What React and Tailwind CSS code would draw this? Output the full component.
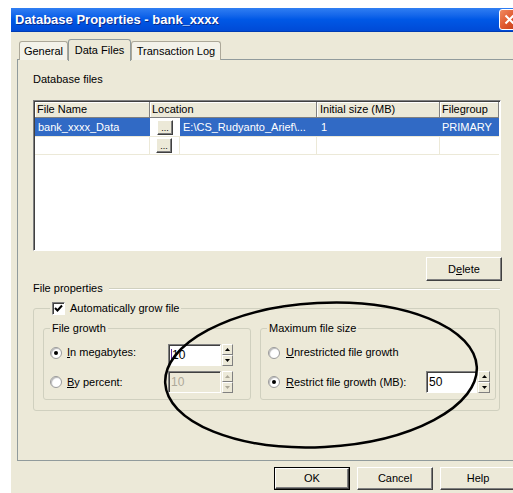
import React from "react";

const raised =
  "bg-[#ece9d8] border border-t-white border-l-white border-r-[#404040] border-b-[#404040] shadow-[inset_-1px_-1px_0_#808080]";
const sunken =
  "border border-t-[#808080] border-l-[#808080] border-r-white border-b-white shadow-[inset_1px_1px_0_#404040]";

function Button({ children, isDefault, className = "" }) {
  if (isDefault) {
    return (
      <div className={`border border-black ${className}`}>
        <div className={`h-full w-full flex items-center justify-center ${raised}`}>{children}</div>
      </div>
    );
  }
  return <div className={`flex items-center justify-center ${raised} ${className}`}>{children}</div>;
}

function Radio({ checked }) {
  return (
    <span className="w-[12px] h-[12px] shrink-0 rounded-full bg-white border border-[#9a9a9a] shadow-[inset_1px_1px_1px_#b8b8b8] flex items-center justify-center">
      {checked && <span className="w-[4px] h-[4px] rounded-full bg-black" />}
    </span>
  );
}

function SpinButton({ up, disabled }) {
  return (
    <div className="h-[11px] w-full bg-[#ece9d8] border border-t-white border-l-white border-r-[#808080] border-b-[#808080] flex items-center justify-center">
      <svg width="5" height="3" viewBox="0 0 5 3">
        <path d={up ? "M2.5 0 L5 3 L0 3Z" : "M0 0 L5 0 L2.5 3Z"} fill={disabled ? "#aca899" : "#000"} />
      </svg>
    </div>
  );
}

function Spinner({ disabled, className = "" }) {
  return (
    <div className={`flex flex-col ${className}`}>
      <SpinButton up disabled={disabled} />
      <SpinButton disabled={disabled} />
    </div>
  );
}

function NumberBox({ value, disabled, caret, className = "" }) {
  return (
    <div
      className={`h-[22px] flex items-center pl-[2px] text-[12px] ${sunken} ${
        disabled ? "bg-[#ece9d8] text-[#aca899]" : "bg-white text-black"
      } ${className}`}
    >
      {caret && <span className="w-px h-[13px] bg-[#5a2a9a]" />}
      <span>{value}</span>
    </div>
  );
}

export default function App() {
  return (
    <div className="relative w-[513px] h-[493px] overflow-hidden bg-white pt-[8px] pl-[11px] font-['Liberation_Sans',Arial,sans-serif] text-[11px] leading-[13px] text-black">
      <div className="w-[520px] h-[485px] bg-[#ece9d8] flex flex-col">
        {/* title bar */}
        <div className="h-[24px] shrink-0 flex items-center pl-[4px] bg-linear-to-b from-[#2f7ef2] via-[#0058e6] to-[#004ad6] border-b border-[#003cb4]">
          <span className="text-white font-bold text-[13px] leading-[16px] [text-shadow:1px_1px_0_#0a2a8a]">
            Database Properties - bank_xxxx
          </span>
          <div className="ml-auto mr-[11px] w-[21px] h-[21px] rounded-[3px] border border-white bg-linear-to-br from-[#f08a60] via-[#e0582e] to-[#c23a16] flex items-center justify-center">
            <svg width="11" height="11" viewBox="0 0 11 11">
              <path d="M1.5 1.5 L9.5 9.5 M9.5 1.5 L1.5 9.5" stroke="#fff" strokeWidth="2" />
            </svg>
          </div>
        </div>

        <div className="pl-[6px] flex flex-col">
          {/* tabs */}
          <div className="mt-[7px] h-[22px] flex items-end pl-[2px] relative z-10">
            <div className="mb-[1px] h-[19px] w-[49px] flex items-center justify-center border border-b-0 border-[#aca899] rounded-t-[3px] bg-[#f3f2ea]">
              General
            </div>
            <div className="h-[22px] w-[63px] flex items-start pt-[4px] justify-center border border-b-0 border-[#919b9c] rounded-t-[3px] bg-[#ece9d8]">
              Data Files
            </div>
            <div className="mb-[1px] h-[19px] w-[90px] flex items-center justify-center border border-b-0 border-[#aca899] rounded-t-[3px] bg-[#f3f2ea]">
              Transaction Log
            </div>
          </div>

          {/* tab page */}
          <div className="-mt-[2px] w-[510px] h-[402px] border border-[#919b9c] pl-[15px] pt-[13px] flex flex-col">
            <div>Database files</div>

            {/* file list */}
            <div className={`mt-[14px] w-[468px] h-[151px] bg-white ${sunken} p-px flex flex-col`}>
              <div className="h-[16px] flex bg-[#ece9d8] border-b border-[#808080]">
                <div className="w-[115px] pl-[2px] border-r border-[#808080] shadow-[inset_1px_1px_0_#fff] flex items-center">File Name</div>
                <div className="w-[167px] pl-[2px] border-r border-[#808080] shadow-[inset_1px_1px_0_#fff] flex items-center">Location</div>
                <div className="w-[123px] pl-[3px] border-r border-[#808080] shadow-[inset_1px_1px_0_#fff] flex items-center">Initial size (MB)</div>
                <div className="w-[59px] pl-[2px] border-r border-[#808080] shadow-[inset_1px_1px_0_#fff] flex items-center">Filegroup</div>
              </div>
              <div className="h-[19px] flex border-b border-[#ece9d8]">
                <div className="w-[115px] pl-[3px] bg-[#316ac5] text-white flex items-center">bank_xxxx_Data</div>
                <div className="w-[30px] flex items-center pl-[7px]">
                  <Button className="w-[16px] h-[15px] text-[9px] leading-[8px] items-end pb-[2px]">...</Button>
                </div>
                <div className="w-[137px] pl-[3px] bg-[#316ac5] text-white flex items-center">E:\CS_Rudyanto_Arief\...</div>
                <div className="w-[123px] pl-[4px] bg-[#316ac5] text-white flex items-center">1</div>
                <div className="w-[59px] pl-[2px] bg-[#316ac5] text-white flex items-center">PRIMARY</div>
              </div>
              <div className="h-[18px] flex border-b border-[#ece9d8]">
                <div className="w-[115px] border-r border-[#ece9d8]" />
                <div className="w-[30px] flex items-center pl-[6px] border-r border-[#ece9d8]">
                  <Button className="w-[16px] h-[15px] text-[9px] leading-[8px] items-end pb-[2px]">...</Button>
                </div>
                <div className="w-[137px] border-r border-[#ece9d8]" />
                <div className="w-[123px] border-r border-[#ece9d8]" />
                <div className="w-[59px]" />
              </div>
            </div>

            <div className="w-[469px] flex justify-end mt-[6px]">
              <Button className="w-[76px] h-[24px]">
                <span>
                  D<span className="underline">e</span>lete
                </span>
              </Button>
            </div>

            {/* file properties */}
            <div className="mt-[1px] w-[467px] flex items-center gap-[6px]">
              <span>File properties</span>
              <div className="flex-1 h-[2px] border-t border-[#d0d0bf] border-b border-b-white" />
            </div>

            <fieldset className="mt-[6px] w-[467px] h-[110px] border border-[#d0d0bf] rounded-[3px] pl-[9px] flex gap-[9px]">
              <legend className="ml-[7px] px-[2px] h-[14px] flex items-center gap-[5px]">
                <span className={`w-[13px] h-[13px] bg-white ${sunken} flex items-center justify-center`}>
                  <svg width="9" height="9" viewBox="0 0 9 9">
                    <path d="M1 4 L3.5 6.5 L8 1.5" stroke="#000" strokeWidth="2" fill="none" />
                  </svg>
                </span>
                <span>
                  Automatically <span className="underline">g</span>row file
                </span>
              </legend>

              <fieldset className="mt-[6px] w-[208px] h-[79px] border border-[#d0d0bf] rounded-[3px]">
                <legend className="ml-[6px] px-[2px] h-[14px] leading-[14px]">File growth</legend>
                <div className="pl-[6px] pt-[9px] flex flex-col gap-[5px]">
                  <div className="h-[22px] flex">
                    <div className="w-[118px] mt-[2px] h-[13px] flex items-center gap-[5px]">
                      <Radio checked />
                      <span>
                        <span className="underline">I</span>n megabytes:
                      </span>
                    </div>
                    <NumberBox value="10" caret className="w-[53px]" />
                    <Spinner className="ml-px w-[11px]" />
                  </div>
                  <div className="h-[22px] flex items-center">
                    <div className="w-[118px] flex items-center gap-[5px]">
                      <Radio />
                      <span>
                        <span className="underline">B</span>y percent:
                      </span>
                    </div>
                    <NumberBox value="10" disabled className="w-[53px]" />
                    <Spinner disabled className="ml-px w-[11px]" />
                  </div>
                </div>
              </fieldset>

              <fieldset className="mt-[6px] w-[236px] h-[79px] border border-[#d0d0bf] rounded-[3px]">
                <legend className="ml-[6px] px-[2px] h-[14px] leading-[14px]">Maximum file size</legend>
                <div className="pl-[7px] pt-[9px] flex flex-col gap-[5px]">
                  <div className="h-[22px] flex">
                    <div className="mt-[2px] h-[13px] flex items-center gap-[6px]">
                      <Radio />
                      <span>
                        <span className="underline">U</span>nrestricted file growth
                      </span>
                    </div>
                  </div>
                  <div className="h-[22px] flex items-center">
                    <div className="w-[158px] flex items-center gap-[6px]">
                      <Radio checked />
                      <span>
                        <span className="underline">R</span>estrict file growth (MB):
                      </span>
                    </div>
                    <NumberBox value="50" className="w-[51px]" />
                    <Spinner className="ml-px w-[12px]" />
                  </div>
                </div>
              </fieldset>
            </fieldset>
          </div>

          {/* dialog buttons */}
          <div className="mt-[6px] flex gap-[7px] pl-[257px]">
            <Button isDefault className="w-[76px] h-[23px]">OK</Button>
            <Button className="w-[76px] h-[23px]">Cancel</Button>
            <Button className="w-[76px] h-[23px]">Help</Button>
          </div>
        </div>
      </div>

      {/* hand-drawn highlight around the size options */}
      <svg className="absolute left-0 top-0 pointer-events-none" width="513" height="493" viewBox="0 0 513 493">
        <ellipse
          cx="321"
          cy="375"
          rx="156"
          ry="72"
          transform="rotate(-3 321 375)"
          fill="none"
          stroke="#000"
          strokeWidth="2.5"
        />
      </svg>
    </div>
  );
}
